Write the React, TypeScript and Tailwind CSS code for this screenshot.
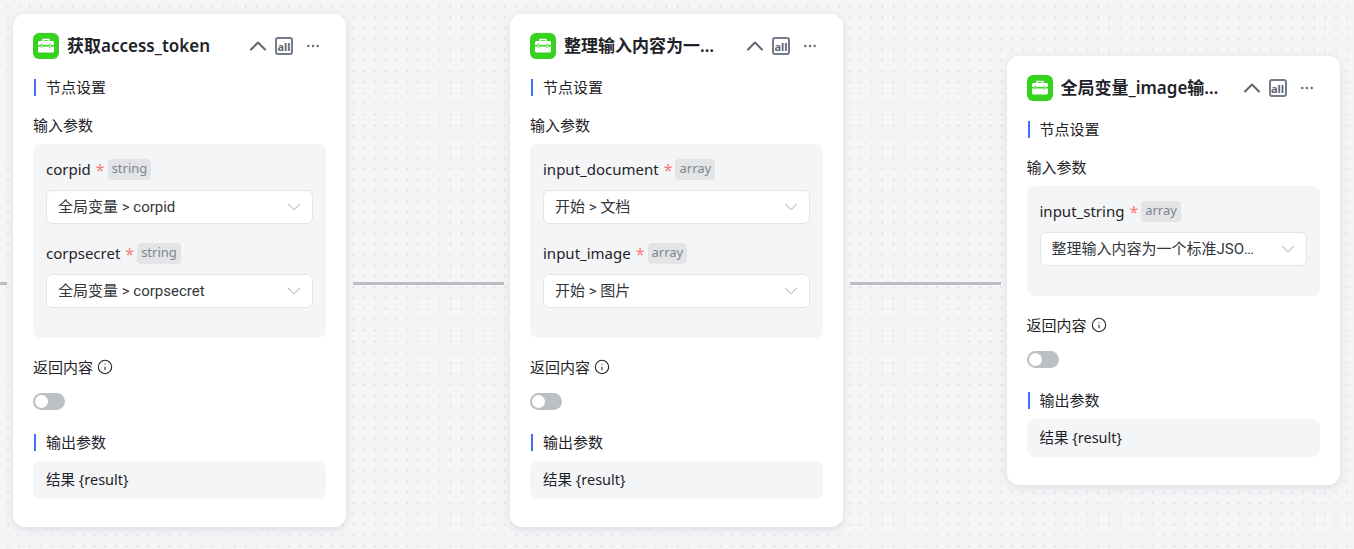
import { ChevronDown, ChevronUp, Ellipsis, Info } from 'lucide-react'

const font = 'font-["Noto_Sans","Noto_Sans_CJK_SC",sans-serif]'

function ToolIcon() {
  return (
    <div className="flex h-[26px] w-[26px] shrink-0 items-center justify-center rounded-[6px] bg-[#36d21f]">
      <svg width="18" height="16" viewBox="0 0 18 16" fill="none">
        <path d="M6 3V1.5h6V3" stroke="#fff" strokeWidth="1.4" />
        <path d="M1 4.5a1.5 1.5 0 0 1 1.5-1.5h13A1.5 1.5 0 0 1 17 4.5V7H1z" fill="#fff" />
        <path d="M1 8.5h16v4.5a1.5 1.5 0 0 1-1.5 1.5h-13A1.5 1.5 0 0 1 1 13z" fill="#fff" />
        <rect x="4" y="6" width="1.6" height="3.5" fill="#fff" stroke="#36d21f" strokeWidth="0.5" />
        <rect x="12.4" y="6" width="1.6" height="3.5" fill="#fff" stroke="#36d21f" strokeWidth="0.5" />
      </svg>
    </div>
  )
}

function SectionTitle({ children }: { children: string }) {
  return (
    <div className="ml-px flex h-[17px] items-center border-l-2 border-[#3f70f6] pl-[10px] text-[15px] leading-[17px] text-[#1f2329]">
      {children}
    </div>
  )
}

function Param({ name, type, value }: { name: string; type: string; value: string }) {
  return (
    <div>
      <div className="flex h-[22px] items-center text-[15px] text-[#1f2329]">
        <span>{name}</span>
        <span className="ml-[5px] mt-[2px] text-base text-[#f77b7b]">*</span>
        <span className="ml-[3px] flex h-[21px] items-center rounded-[4px] bg-[#e3e4e6] px-1 text-[13px] text-[#7f8590]">
          {type}
        </span>
      </div>
      <div className="mt-[10px] flex h-[34px] items-center justify-between rounded-[6px] border border-[#e3e5e8] bg-white pl-[11px] pr-[7px]">
        <span className='truncate font-["Roboto","Noto_Sans_CJK_SC",sans-serif] text-[15px] text-[#33363b]'>{value}</span>
        <ChevronDown size={22} strokeWidth={1} className="ml-4 shrink-0 text-[#9aa0a8]" />
      </div>
    </div>
  )
}

function Card({
  title,
  params,
  className,
  panelClass,
}: {
  title: string
  params: { name: string; type: string; value: string }[]
  className: string
  panelClass: string
}) {
  return (
    <div className={`absolute w-[333px] rounded-[12px] bg-white px-5 shadow-[0_2px_8px_rgba(30,40,60,0.12)] ${className}`}>
      <div className="mt-[19px] flex h-[26px] items-center">
        <ToolIcon />
        <div className="ml-2 w-[166px] shrink-0 truncate text-[17px] font-semibold text-[#1f2329]">{title}</div>
        <div className="ml-auto flex items-center text-[#5f6672]">
          <ChevronUp size={28} strokeWidth={1.8} className="-my-1 mr-[3px]" />
          <div className="flex h-[18px] w-[18px] items-center justify-center rounded-[3px] border-2 border-[#747c88] text-[11px] font-bold leading-none text-[#5f6672]">
            all
          </div>
          <Ellipsis size={16} strokeWidth={1.6} className="ml-[12px] mr-[5px]" />
        </div>
      </div>
      <div className="mt-[20px]">
        <SectionTitle>节点设置</SectionTitle>
      </div>
      <div className="mt-[19px] text-[15px] leading-5 text-[#1f2329]">输入参数</div>
      <div className={`mt-[9px] flex flex-col gap-[18px] rounded-[8px] bg-[#f4f5f7] px-[13px] pt-[14px] ${panelClass}`}>
        {params.map((p) => (
          <Param key={p.name} {...p} />
        ))}
      </div>
      <div className="mt-[19px] flex items-center text-[15px] leading-5 text-[#1f2329]">
        返回内容
        <Info size={16} strokeWidth={1.6} className="ml-[4px]" />
      </div>
      <div className="mt-[16px] flex h-[17px] w-8 items-center rounded-full bg-[#bcbfc4] pl-[2px]">
        <div className="h-[13px] w-[13px] rounded-full bg-white" />
      </div>
      <div className="mt-[24px]">
        <SectionTitle>输出参数</SectionTitle>
      </div>
      <div className="mt-[10px] mb-[28px] flex h-[38px] items-center rounded-[8px] bg-[#f4f5f7] px-[13px] text-[14.5px] text-[#1f2329]">
        结果 {'{result}'}
      </div>
    </div>
  )
}

export default function App() {
  return (
    <div
      className={`relative h-[549px] w-[1354px] overflow-hidden bg-[#f4f5f7] bg-[radial-gradient(circle,#e2e4e8_1px,transparent_1px)] bg-[size:10.8px_10.8px] bg-[position:2.6px_1.3px] ${font}`}
    >
      <div className="absolute left-0 top-[282px] h-[3px] w-[7px] bg-[#bcbec2]" />
      <div className="absolute left-[353px] top-[282px] h-[3px] w-[151px] bg-[#bcbec2]" />
      <div className="absolute left-[850px] top-[282px] h-[3px] w-[151px] bg-[#bcbec2]" />

      <Card
        className="left-[13px] top-[14px]"
        panelClass="h-[194px]"
        title="获取access_token"
        params={[
          { name: 'corpid', type: 'string', value: '全局变量 > corpid' },
          { name: 'corpsecret', type: 'string', value: '全局变量 > corpsecret' },
        ]}
      />
      <Card
        className="left-[510px] top-[14px]"
        panelClass="h-[194px]"
        title="整理输入内容为一个标准JSON"
        params={[
          { name: 'input_document', type: 'array', value: '开始 > 文档' },
          { name: 'input_image', type: 'array', value: '开始 > 图片' },
        ]}
      />
      <Card
        className="left-[1006.5px] top-[56px]"
        panelClass="h-[110px]"
        title="全局变量_image输出结果"
        params={[{ name: 'input_string', type: 'array', value: '整理输入内容为一个标准JSON字符串' }]}
      />
    </div>
  )
}
